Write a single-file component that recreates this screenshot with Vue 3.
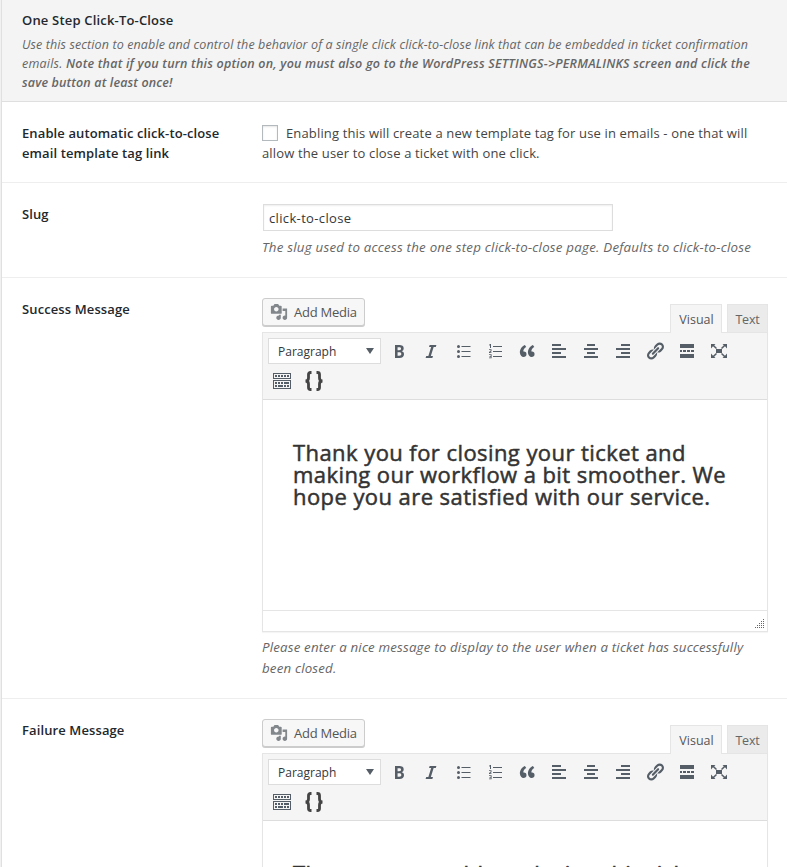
<script setup>
import { ref } from 'vue'

const slug = ref('click-to-close')

const editors = [
  {
    label: 'Success Message',
    message: ['Thank you for closing your ticket and', 'making our workflow a bit smoother. We', 'hope you are satisfied with our service.'],
    hint: ['Please enter a nice message to display to the user when a ticket has successfully', 'been closed.'],
  },
  {
    label: 'Failure Message',
    message: ['There was a problem closing this ticket'],
    hint: [],
  },
]

const icons = [
  { name: 'bold', d: 'M6 4v13h4.54c1.37 0 2.46-.33 3.26-1 .8-.66 1.2-1.58 1.2-2.77 0-.84-.17-1.51-.51-2.01s-.9-.85-1.67-1.03v-.09c.57-.1 1.02-.4 1.36-.9s.51-1.13.51-1.91c0-1.14-.39-1.98-1.17-2.5C12.75 4.26 11.5 4 9.78 4H6zm2.57 5.15V6.26h1.36c.73 0 1.27.11 1.61.32.34.22.51.58.51 1.07 0 .54-.16.92-.47 1.15s-.82.35-1.51.35h-1.5zm0 2.19h1.6c1.44 0 2.16.53 2.16 1.61 0 .6-.17 1.05-.51 1.34s-.86.43-1.57.43H8.57v-3.38z' },
  { name: 'italic', d: 'M14.78 6h-2.13l-2.8 9h2.12l-.62 2H4.6l.62-2h2.14l2.8-9H8.03l.62-2h6.75z' },
  { name: 'bullets', d: 'M8.5 5h9v1h-9zM8.5 10h9v1h-9zM8.5 15h9v1h-9zM5.5 4a1.5 1.5 0 1 1 0 3 1.5 1.5 0 0 1 0-3zM5.5 9a1.5 1.5 0 1 1 0 3 1.5 1.5 0 0 1 0-3zM5.5 14a1.5 1.5 0 1 1 0 3 1.5 1.5 0 0 1 0-3z' },
  { name: 'numbers', d: 'M8 5h9v1H8zM8 10h9v1H8zM8 15h9v1H8zM5 3h1v4H5V4.300l-.8.400V3.700zM4 8.300h2.500v2L5 11.300h1.500v.8H4v-1.200l1.600-1.100v-.7H4zM4 13.300h2.600v4H4v-.8h1.700v-.8H4.500v-.8h1.200v-.8H4z' },
  { name: 'quote', d: 'M9.49 13.22c0-.74-.2-1.38-.61-1.9-.62-.78-1.83-.88-2.53-.72-.29-1.65 1.11-3.75 2.92-4.65L7.88 4c-2.73 1.3-5.42 4.28-4.96 8.05C3.21 14.43 4.59 16 6.54 16c.85 0 1.56-.25 2.12-.75s.83-1.18.83-2.03zm8.05 0c0-.74-.2-1.38-.61-1.9-.63-.78-1.83-.88-2.53-.72-.29-1.65 1.11-3.75 2.92-4.65L15.93 4c-2.73 1.3-5.41 4.28-4.95 8.05.29 2.38 1.66 3.95 3.61 3.95.85 0 1.56-.25 2.12-.75s.83-1.18.83-2.03z' },
  { name: 'left', d: 'M3 3h9v2H3zM3 7h14v2H3zM3 11h9v2H3zM3 15h14v2H3z' },
  { name: 'center', d: 'M6 3h8v2H6zM3 7h14v2H3zM6 11h8v2H6zM3 15h14v2H3z' },
  { name: 'right', d: 'M8 3h9v2H8zM3 7h14v2H3zM8 11h9v2H8zM3 15h14v2H3z' },
  { name: 'link', d: 'M17.74 2.76c1.68 1.69 1.68 4.41 0 6.1l-1.53 1.52c-1.12 1.12-2.7 1.47-4.14 1.09l2.62-2.61.76-.77.76-.76c.84-.84.84-2.2 0-3.04-.84-.85-2.2-.85-3.04 0l-.77.76-3.38 3.38c-.37-1.44-.02-3.02 1.1-4.14l1.52-1.53c1.69-1.68 4.42-1.68 6.1 0zM8.59 13.43l5.34-5.34c.42-.42.42-1.1 0-1.52-.44-.43-1.13-.39-1.53 0l-5.33 5.34c-.42.42-.42 1.1 0 1.52.44.43 1.13.39 1.52 0zm-.76 2.29l4.14-4.15c.38 1.44.03 3.02-1.09 4.14l-1.52 1.53c-1.69 1.68-4.41 1.68-6.1 0-1.68-1.68-1.68-4.42 0-6.1l1.53-1.52c1.12-1.12 2.7-1.47 4.14-1.1l-4.14 4.15c-.85.84-.85 2.2 0 3.05.84.84 2.2.84 3.04 0z' },
  { name: 'more', d: 'M3 3h14v4H3zM3 9h2v2H3zM6 9h3v2H6zM10 9h3v2h-3zM14 9h3v2h-3zM3 13h14v4H3z' },
  { name: 'fullscreen', d: 'M7 8h6v4H7zM2 3h4.500L5.200 4.300 8 7 7 8 4 5.300 2 7.500zM18 3h-4.500l1.300 1.300L12 7l1 1 3-2.700 2 2.200zM2 17h4.500l-1.300-1.300L8 13l-1-1-3 2.700-2-2.200zM18 17h-4.500l1.300-1.300L12 13l1-1 3 2.700 2-2.200z' },
]

const keys = 'M1 2h18v6H1zM2 3v4h16V3zM1 9h18v9H1zM2 10v7h16v-7zM3 4h2v2H3zM6 4h2v2H6zM9 4h2v2H9zM12 4h2v2h-2zM15 4h2v2h-2zM3 11h2v2H3zM6 11h2v2H6zM9 11h2v2H9zM12 11h5v2h-5zM3 14h2v2H3zM6 14h5v2H6zM12 14h2v2h-2zM15 14h2v2h-2z'
const media = 'M13 11V4c0-.55-.45-1-1-1h-1.67L9 1H5L3.67 3H2c-.55 0-1 .45-1 1v7c0 .55.45 1 1 1h10c.55 0 1-.45 1-1zM7 4.500c1.380 0 2.500 1.120 2.500 2.500S8.380 9.500 7 9.500 4.500 8.380 4.500 7 5.620 4.500 7 4.500zM14 6h5v10.500c0 1.380-1.120 2.500-2.500 2.500S14 17.880 14 16.500s1.120-2.500 2.500-2.500c.17 0 .34.020.5.050V9h-3V6zm-4 8.050V13h2v3.500c0 1.380-1.120 2.500-2.500 2.500S7 17.880 7 16.500 8.120 14 9.500 14c.17 0 .34.020.5.050z'
const grip = [[8, 0], [6, 2], [8, 2], [4, 4], [6, 4], [8, 4], [2, 6], [4, 6], [6, 6], [8, 6], [0, 8], [2, 8], [4, 8], [6, 8], [8, 8]]
</script>

<template>
  <main class="settings">
    <header class="section-head">
      <h2>One Step Click-To-Close</h2>
      <p>
        <span class="line head-a">Use this section to enable and control the behavior of a single click click-to-close link that can be embedded in ticket confirmation</span>
        <span class="line head-b">emails. <strong>Note that if you turn this option on, you must also go to the WordPress SETTINGS-&gt;PERMALINKS screen and click the</strong></span>
        <strong class="line head-c">save button at least once!</strong>
      </p>
    </header>

    <section class="row">
      <h3>
        <span class="line">Enable automatic click-to-close</span>
        <span class="line">email template tag link</span>
      </h3>
      <label class="check-text">
        <span class="line"><input type="checkbox" class="check" />Enabling this will create a new template tag for use in emails - one that will</span>
        <span class="line">allow the user to close a ticket with one click.</span>
      </label>
    </section>

    <section class="row slug-row">
      <h3>Slug</h3>
      <div>
        <input v-model="slug" type="text" class="slug" />
        <p class="hint slug-hint">The slug used to access the one step click-to-close page. Defaults to click-to-close</p>
      </div>
    </section>

    <section v-for="editor in editors" :key="editor.label" class="row editor-row">
      <h3>{{ editor.label }}</h3>
      <div class="editor">
        <div class="tools">
          <button class="add-media">
            <svg viewBox="0 0 20 20"><path :d="media" /></svg>
            <span>Add Media</span>
          </button>
          <div class="tabs">
            <button class="tab active">Visual</button>
            <button class="tab">Text</button>
          </div>
        </div>
        <div class="frame">
          <div class="toolbar">
            <div class="format">
              <span>Paragraph</span>
              <svg viewBox="0 0 8 6"><path d="M0 0h8L4 6z" /></svg>
            </div>
            <span v-for="icon in icons" :key="icon.name" class="tool">
              <svg viewBox="0 0 20 20"><path :d="icon.d" /></svg>
            </span>
            <span class="tool second">
              <svg viewBox="0 0 20 20"><path fill-rule="evenodd" :d="keys" /></svg>
            </span>
            <span class="tool second braces">
              <svg viewBox="0 0 20 20"><path d="M7.500 1.500H6.500Q4.500 1.500 4.500 3.500V7Q4.500 10 1.500 10Q4.500 10 4.500 13V16.500Q4.500 18.500 6.500 18.500H7.500M12.500 1.500h1Q15.500 1.500 15.500 3.500V7Q15.500 10 18.500 10Q15.500 10 15.500 13V16.500Q15.500 18.500 13.500 18.500H12.500" /></svg>
            </span>
          </div>
          <div class="content">
            <h1><span v-for="text in editor.message" :key="text" class="line">{{ text }}</span></h1>
          </div>
          <div class="status">
            <svg viewBox="0 0 9 9"><rect v-for="([x, y], i) in grip" :key="i" :x="x" :y="y" width="1" height="1" /></svg>
          </div>
        </div>
        <p v-if="editor.hint.length" class="hint"><span v-for="text in editor.hint" :key="text" class="line">{{ text }}</span></p>
      </div>
    </section>
  </main>
</template>

<style>
body { background: #f1f1f1; overflow: hidden; }
</style>

<style scoped>
* { box-sizing: border-box; }
.settings {
  height: 867px; overflow: hidden; margin-left: 1px; border-left: 1px solid #e0e0e0; background: #fff;
  font-family: "Open Sans", "Noto Sans", sans-serif; font-size: 13px; color: #444;
}
h1, h2, h3, p { margin: 0; }
button, input { font: inherit; letter-spacing: inherit; }
.line { display: block; white-space: nowrap; }
.section-head { height: 102px; padding: 10px 20px; background: #f4f4f4; border-bottom: 1px solid #dfdfdf; }
h2 { font-size: 13px; line-height: 20px; font-weight: 600; color: #23282d; letter-spacing: .18px; }
.section-head p { margin-top: 5px; font-size: 12.500px; line-height: 19px; font-style: italic; color: #666; }
.section-head strong { font-weight: 600; }
.head-a { letter-spacing: .115px; }
.head-b { letter-spacing: .21px; }
.head-c { letter-spacing: .14px; }
.row { display: grid; grid-template-columns: 240px 506px; padding: 21px 20px 19px; border-bottom: 1px solid #eee; }
h3 { font-size: 13px; line-height: 20px; font-weight: 600; color: #23282d; letter-spacing: .11px; }
.check-text { line-height: 20px; letter-spacing: .15px; }
.check { appearance: none; width: 16px; height: 16px; margin: 0 8px 0 0; border: 1px solid #b4b9be; background: #fff; vertical-align: -3px; box-shadow: inset 0 1px 2px rgba(0, 0, 0, .1); }
.slug-row { height: 95px; }
.slug { display: block; width: 350px; height: 27px; margin: 0 1px; padding: 2px 5px; border: 1px solid #ddd; color: #32373c; letter-spacing: .35px; box-shadow: inset 0 1px 2px rgba(0, 0, 0, .07); }
.hint { font-size: 13.300px; line-height: 21px; font-style: italic; color: #666; margin-top: 5px; letter-spacing: .18px; white-space: nowrap; }
.slug-hint { margin-top: 6px; letter-spacing: .23px; }
.editor-row { height: 421px; padding-top: 20px; }
.editor-row h3 { margin-top: 1px; }
.tools { display: flex; justify-content: space-between; height: 34px; position: relative; z-index: 1; }
.add-media { display: flex; align-items: center; width: 103px; height: 28px; padding: 0 7px; gap: 6px; border: 1px solid #ccc; border-radius: 3px; background: #f7f7f7; box-shadow: 0 1px 0 #ccc; color: #555; letter-spacing: -.25px; white-space: nowrap; }
.add-media svg { width: 18px; height: 18px; flex: none; fill: #82878c; }
.tabs { display: flex; gap: 5px; padding-top: 6px; height: 35px; }
.tab { width: 52px; height: 28px; padding: 1px 0 0; border: 1px solid #e5e5e5; border-bottom: 0; background: #ebebeb; color: #666; font-size: 12.500px; }
.tab:last-child { width: 41px; letter-spacing: -.2px; }
.tab.active { height: 29px; padding: 1px 0 1px 1px; background: #f5f5f5; color: #555; }
.frame { border: 1px solid #e5e5e5; box-shadow: 0 1px 1px rgba(0, 0, 0, .04); }
.toolbar { display: flex; flex-wrap: wrap; align-content: flex-start; height: 67px; padding: 5px 10px 0 5px; background: #f5f5f5; border-bottom: 1px solid #ddd; }
.format { display: flex; align-items: center; justify-content: space-between; width: 113px; height: 26px; margin-right: 2px; padding: 0 6px 0 9px; background: #fff; border: 1px solid #ddd; color: #32373c; font-size: 12px; }
.format svg { width: 8px; height: 6px; fill: #555d66; }
.tool { display: flex; align-items: center; justify-content: center; width: 32px; height: 26px; }
.tool svg { width: 20px; height: 20px; fill: #555d66; }
.second { height: 33px; margin-left: -2px; margin-right: 2px; }
.braces svg { fill: none; stroke: #444; stroke-width: 2.800px; }
.content { height: 210px; padding: 41px 30px 0; }
h1 { font-size: 22px; line-height: 22px; font-weight: 400; color: #333; letter-spacing: .43px; -webkit-text-stroke: .5px #333; }
.status { display: flex; align-items: flex-end; justify-content: flex-end; height: 21px; padding: 0 3px 3px; border-top: 1px solid #e5e5e5; }
.status svg { width: 9px; height: 9px; fill: #666; }
</style>
